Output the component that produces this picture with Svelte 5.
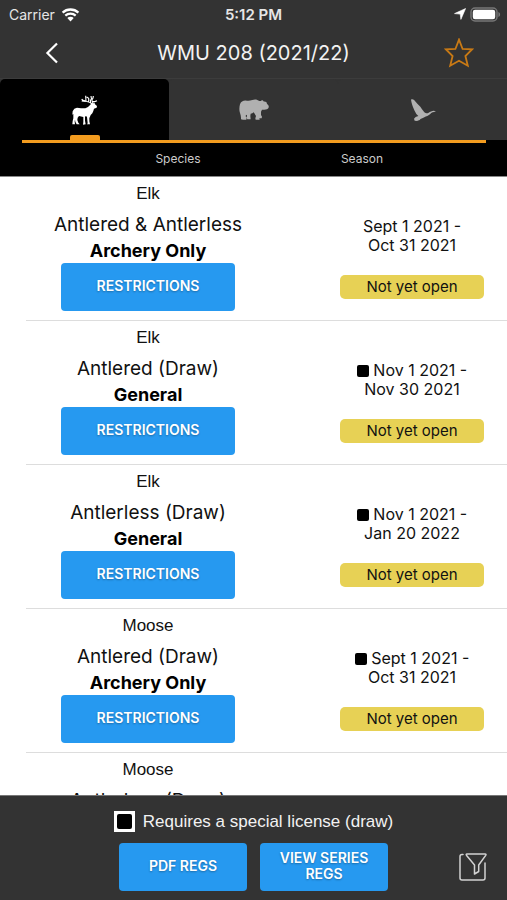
<script>
  const tabs = [
    { id: 'ungulates', label: 'Elk, moose and deer' },
    { id: 'bears', label: 'Bears' },
    { id: 'birds', label: 'Game birds' }
  ];

  const seasons = [
    { species: 'Elk', type: 'Antlered & Antlerless', method: 'Archery Only', from: 'Sept 1 2021', to: 'Oct 31 2021', draw: false },
    { species: 'Elk', type: 'Antlered (Draw)', method: 'General', from: 'Nov 1 2021', to: 'Nov 30 2021', draw: true },
    { species: 'Elk', type: 'Antlerless (Draw)', method: 'General', from: 'Nov 1 2021', to: 'Jan 20 2022', draw: true },
    { species: 'Moose', type: 'Antlered (Draw)', method: 'Archery Only', from: 'Sept 1 2021', to: 'Oct 31 2021', draw: true },
    { species: 'Moose', type: 'Antlerless (Draw)', method: 'Archery Only', from: 'Sept 1 2021', to: 'Oct 31 2021', draw: true }
  ];

  let activeTab = $state('ungulates');
  let favorite = $state(false);
</script>

<div class="app">
  <div class="status-bar">
    <div class="carrier">
      <span>Carrier</span>
      <svg width="19" height="15" viewBox="0 0 19 15" aria-hidden="true">
        <path d="M1.6 5.6a11.6 11.6 0 0 1 15.8 0" fill="none" stroke="#fff" stroke-width="2.3" />
        <path d="M4.3 8.6a7.6 7.6 0 0 1 10.4 0" fill="none" stroke="#fff" stroke-width="2.2" />
        <path d="M9.5 14.4 6.3 11.1a4.6 4.6 0 0 1 6.4 0z" fill="#fff" />
      </svg>
    </div>
    <div class="clock">5:12 PM</div>
    <div class="indicators">
      <svg width="12" height="12" viewBox="0 0 12 12" aria-hidden="true">
        <path d="M11.6.5 6.9 11.4 6.2 6.1.5 5.6z" fill="#fff" stroke="#fff" stroke-width=".6" stroke-linejoin="round" />
      </svg>
      <svg width="31" height="15" viewBox="0 0 31 15" aria-hidden="true">
        <rect x="1" y="1" width="26" height="13" rx="4" fill="none" stroke="#777" stroke-width="1.4" />
        <rect x="2.8" y="2.8" width="22.4" height="9.4" rx="2.2" fill="#fff" />
        <path d="M28.4 5v5c1.1-.4 1.7-1.4 1.7-2.5S29.5 5.4 28.4 5z" fill="#777" />
      </svg>
    </div>
  </div>

  <header>
    <button class="icon-btn back" aria-label="Back">
      <svg width="14" height="22" viewBox="0 0 14 22">
        <path d="M12 1.5 2.4 11 12 20.5" fill="none" stroke="#fff" stroke-width="2.2" />
      </svg>
    </button>
    <h1>WMU 208 (2021/22)</h1>
    <button class="icon-btn star" aria-label="Favorite" aria-pressed={favorite} onclick={() => (favorite = !favorite)}>
      <svg width="30" height="30" viewBox="0 0 30 30">
        <path
          d="M15 1.6 18.6 11 28 11.4 21.4 18 23.8 27.8 15 22.8 6.2 27.8 8.6 18 2 11.4 11.4 11z"
          fill={favorite ? '#d07f17' : 'none'}
          stroke="#c97a15"
          stroke-width="1.8"
        />
      </svg>
    </button>
  </header>

  <nav>
    {#each tabs as tab}
      <button class="tab" class:active={activeTab === tab.id} aria-label={tab.label} onclick={() => (activeTab = tab.id)}>
        {#if tab.id === 'ungulates'}
          <svg width="28" height="32" viewBox="0 0 84 96">
            <g transform="translate(-34 -26)">
              <path
                fill="currentColor"
                d="M92 58 96 53 101 55 104 51 106 57 112 62 111 67 103 70 101 77 98 84 93 89 91 94 89 98 89 108 91 117 82 117 84 114 82 95 79 92 76 94 76 106 78 117 70 118 71 110 71 95 58 92 54 97 53 104 56 112 60 117 51 117 47 109 46 103 45 108 46 117 38 117 39 107 41 99 41 91 41 86 38 88 39 78 44 70 52 67 64 69 77 69 85 65z"
              />
              <path
                fill="none"
                stroke="currentColor"
                stroke-width="3.4"
                d="M98 56C94 52 86 49 77 47 72 46 68 45 66 41M66 47 78 48M79 48 78 31M87 50 87 39 81 35M93 53 92 42M101 56C98 48 95 44 94 32M98 49 107 48 112 46M97 43 100 38 101 32"
              />
            </g>
          </svg>
        {:else if tab.id === 'bears'}
          <svg width="30" height="22" viewBox="0 0 90 66">
            <g transform="translate(-41 -56)">
              <path
                fill="currentColor"
                d="M44 72C47 63 54 60 64 61 70 62 75 61 81 59 88 56 96 57 102 62L107 62 109 60C112 59 114 60 114 63L123 65 125 70 130 76C131 81 129 85 125 87L117 88 110 88 107 94 107 104 110 109 109 114 102 114 103 118 91 118 90 114 92 107 88 100 85 96 81 99 76 100 75 107 76 117 66 117 64 112 65 105 62 103 61 108 64 112 63 118 53 118 47 117 47 112 46 105 44 98C41 90 42 79 44 72z"
              />
            </g>
          </svg>
        {:else}
          <svg width="26" height="24" viewBox="0 0 78 72">
            <g transform="translate(-43 -42)">
              <path
                fill="currentColor"
                d="M46 47C49 44 53 46 56 49L65 59 74 68 79 76 86 85C91 89 95 88 99 86 103 82 109 81 114 80L121 82 115 84C109 85 106 87 104 90 99 95 91 97 86 100 80 104 75 104 72 108L64 111 57 110 55 104 60 99 68 96 62 90 56 79 51 67 48 57z"
              />
            </g>
          </svg>
        {/if}
      </button>
    {/each}
  </nav>

  <div class="columns">
    <span>Species</span>
    <span>Season</span>
  </div>

  <ul class="list">
    {#each seasons as season}
      <li>
        <div class="species">
          <p class="name">{season.species}</p>
          <p class="type">{season.type}</p>
          <p class="method">{season.method}</p>
          <button class="btn-primary restrictions">RESTRICTIONS</button>
        </div>
        <div class="season">
          <p class="dates">
            {#if season.draw}<span class="draw-mark"></span>{/if}
            {season.from} -<br />{season.to}
          </p>
          <span class="badge">Not yet open</span>
        </div>
      </li>
    {/each}
  </ul>

  <footer>
    <div class="legend">
      <span class="legend-box"><span class="legend-mark"></span></span>
      <span>Requires a special license (draw)</span>
    </div>
    <div class="actions">
      <div class="buttons">
        <button class="btn-primary">PDF REGS</button>
        <button class="btn-primary">VIEW SERIES REGS</button>
      </div>
      <button class="icon-btn filter" aria-label="Filter">
        <svg width="30" height="30" viewBox="0 0 30 30" fill="none" stroke="#d2d2d2" stroke-width="1.5" stroke-linejoin="round" stroke-linecap="round">
          <path d="M5 2.5H4Q2 2.5 2 4.5V26Q2 28 4 28H25Q27 28 27 26V11" />
          <path d="M9 2H27Q28.6 2 27.7 3.4L20.7 13V19.5L16.5 22V13L8.6 3.4Q7.6 2 9 2z" />
        </svg>
      </button>
    </div>
  </footer>
</div>

<style>
  :global(body) {
    margin: 0;
  }

  .app {
    height: 100vh;
    display: flex;
    flex-direction: column;
    background: #fff;
    color: #111;
    font-family: Inter, "Liberation Sans", sans-serif;
  }

  p, h1, ul {
    margin: 0;
    padding: 0;
    font-weight: 400;
  }

  button {
    font-family: inherit;
    border: none;
    padding: 0;
    cursor: pointer;
  }

  svg {
    display: block;
  }

  .status-bar {
    display: grid;
    grid-template-columns: 1fr auto 1fr;
    align-items: center;
    height: 28px;
    padding: 0 6px;
    background: #333;
    color: #e6e6e6;
    font-size: 14px;
  }

  .carrier, .indicators {
    display: flex;
    align-items: center;
    gap: 6px;
  }

  .carrier {
    padding-left: 3px;
  }

  .indicators {
    justify-content: flex-end;
    gap: 4px;
  }

  .clock {
    font-size: 15px;
    font-weight: 600;
  }

  header {
    display: grid;
    grid-template-columns: 1fr auto 1fr;
    align-items: center;
    height: 50px;
    padding: 0 33px;
    background: #333;
    border-bottom: 1px solid #3c3c3c;
  }

  h1 {
    color: #f2f2f2;
    font-size: 20px;
    line-height: 28px;
  }

  .icon-btn {
    background: none;
  }

  .back {
    justify-self: start;
    padding-left: 12px;
  }

  .star {
    justify-self: end;
  }

  nav {
    display: flex;
    height: 61px;
    background: #333;
  }

  .tab {
    position: relative;
    flex: 1;
    display: flex;
    align-items: center;
    justify-content: center;
    background: #333;
    color: #b0b0b0;
    border-radius: 5px 5px 0 0;
  }

  .tab.active {
    background: #000;
    color: #fff;
  }

  .tab.active::after {
    content: "";
    position: absolute;
    bottom: 0;
    width: 30px;
    height: 5px;
    background: #f39c1f;
    border-radius: 2px 2px 0 0;
  }

  .columns {
    position: relative;
    display: grid;
    grid-template-columns: 1fr 1fr;
    padding: 9px 53px 8px 86px;
    background: #000;
    color: #ccc;
    border-bottom: 1px solid #888;
    font-size: 12px;
    line-height: 19px;
    text-align: center;
  }

  .columns::before {
    content: "";
    position: absolute;
    top: 0;
    left: 22px;
    right: 21px;
    height: 3px;
    background: #f39c1f;
  }

  .list {
    flex: 1;
    min-height: 0;
    overflow-y: auto;
    scrollbar-width: none;
    list-style: none;
  }

  li {
    display: grid;
    grid-template-columns: 244fr 190fr;
    column-gap: 47px;
    margin-left: 26px;
    border-bottom: 1px solid #ddd;
    text-align: center;
  }

  .species {
    display: flex;
    flex-direction: column;
    align-items: center;
    padding: 7px 0 9px;
  }

  .name {
    margin-bottom: 7px;
    font-family: "Liberation Sans", sans-serif;
    font-size: 17px;
    line-height: 20px;
  }

  .type {
    font-size: 19px;
    line-height: 28px;
  }

  .method {
    color: #000;
    font-size: 18px;
    font-weight: 700;
    line-height: 24px;
  }

  .btn-primary {
    height: 48px;
    padding: 0 16px 2px;
    background: #2699f0;
    color: #fff;
    border-radius: 4px;
    font-size: 14px;
    font-weight: 600;
    line-height: 16px;
    text-shadow: 0 1px 2px rgba(0, 0, 0, 0.3);
  }

  .restrictions {
    width: 174px;
  }

  .season {
    display: flex;
    flex-direction: column;
    align-items: center;
    justify-content: flex-end;
    gap: 20px;
    padding-bottom: 21px;
  }

  .dates {
    font-size: 16px;
    line-height: 19px;
  }

  .draw-mark {
    display: inline-block;
    width: 12px;
    height: 12px;
    background: #000;
    border-radius: 2px;
    vertical-align: -1px;
  }

  .badge {
    width: 144px;
    background: #e7d155;
    border-radius: 5px;
    font-size: 15px;
    line-height: 24px;
  }

  footer {
    padding: 15px 19px 9px;
    background: #333;
    border-top: 1px solid #777;
  }

  .legend {
    display: flex;
    align-items: center;
    justify-content: center;
    gap: 8px;
    margin-bottom: 11px;
    color: #f2f2f2;
    font-family: "Liberation Sans", sans-serif;
    font-size: 17px;
    line-height: 21px;
  }

  .legend-box {
    padding: 3px;
    background: #fff;
  }

  .legend-mark {
    display: block;
    width: 15px;
    height: 15px;
    background: #000;
    border-radius: 2px;
  }

  .actions {
    display: grid;
    grid-template-columns: 1fr auto 1fr;
    align-items: center;
  }

  .buttons {
    grid-column: 2;
    display: flex;
    gap: 13px;
  }

  .buttons .btn-primary {
    width: 128px;
  }

  .filter {
    justify-self: end;
  }
</style>
